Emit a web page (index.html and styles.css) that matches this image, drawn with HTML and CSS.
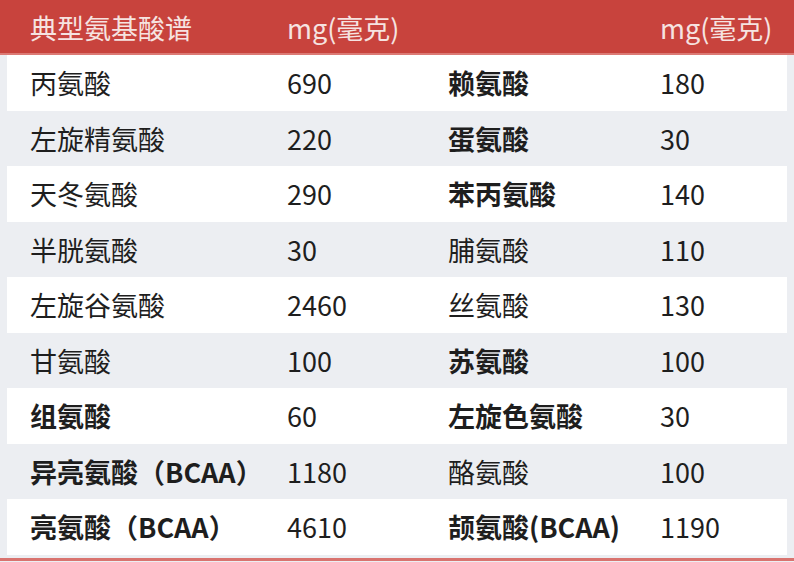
FILE: index.html
```html
<!DOCTYPE html>
<html lang="zh">
<head>
<meta charset="utf-8">
<link rel="stylesheet" href="styles.css">
</head>
<body>
<div class="table">
  <div class="row head">
    <span>典型氨基酸谱</span><span>mg(毫克)</span><span></span><span>mg(毫克)</span>
  </div>
  <div class="row white"><span>丙氨酸</span><span>690</span><span class="b">赖氨酸</span><span>180</span></div>
  <div class="row gray"><span>左旋精氨酸</span><span>220</span><span class="b">蛋氨酸</span><span>30</span></div>
  <div class="row white"><span>天冬氨酸</span><span>290</span><span class="b">苯丙氨酸</span><span>140</span></div>
  <div class="row gray"><span>半胱氨酸</span><span>30</span><span>脯氨酸</span><span>110</span></div>
  <div class="row white"><span>左旋谷氨酸</span><span>2460</span><span>丝氨酸</span><span>130</span></div>
  <div class="row gray"><span>甘氨酸</span><span>100</span><span class="b">苏氨酸</span><span>100</span></div>
  <div class="row white"><span class="b">组氨酸</span><span>60</span><span class="b">左旋色氨酸</span><span>30</span></div>
  <div class="row gray"><span class="b">异亮氨酸（BCAA）</span><span>1180</span><span>酪氨酸</span><span>100</span></div>
  <div class="row white"><span class="b">亮氨酸（BCAA）</span><span>4610</span><span class="b">颉氨酸(BCAA)</span><span>1190</span></div>
  <div class="foot"></div>
</div>
</body>
</html>
```
FILE: styles.css
```css
html, body {
  margin: 0;
  padding: 0;
  background: #eceef2;
}
body {
  width: 794px;
  height: 562px;
  overflow: hidden;
  font-family: "Noto Sans CJK SC", "Noto Sans", sans-serif;
  color: #1e1e1e;
}
.table {
  display: flex;
  flex-direction: column;
}
.row {
  display: grid;
  grid-template-columns: 257px 161px 212px 1fr;
  align-items: center;
  padding-left: 30px;
  font-size: 27px;
  line-height: 1;
  height: 55.5px;
  box-sizing: border-box;
}
.row span {
  white-space: nowrap;
}
.head {
  height: 55px;
  background: #c8433d;
  color: #f6e3e1;
  border-bottom: 2px solid #dc7a75;
  padding-top: 1px;
}
.white {
  background: #ffffff;
  margin: 0 7px;
  padding-left: 23px;
}
.gray {
  background: #eceef2;
}
.b {
  font-weight: 700;
}
.foot {
  height: 3px;
  margin-top: 3px;
  background: #d9736f;
}
```
